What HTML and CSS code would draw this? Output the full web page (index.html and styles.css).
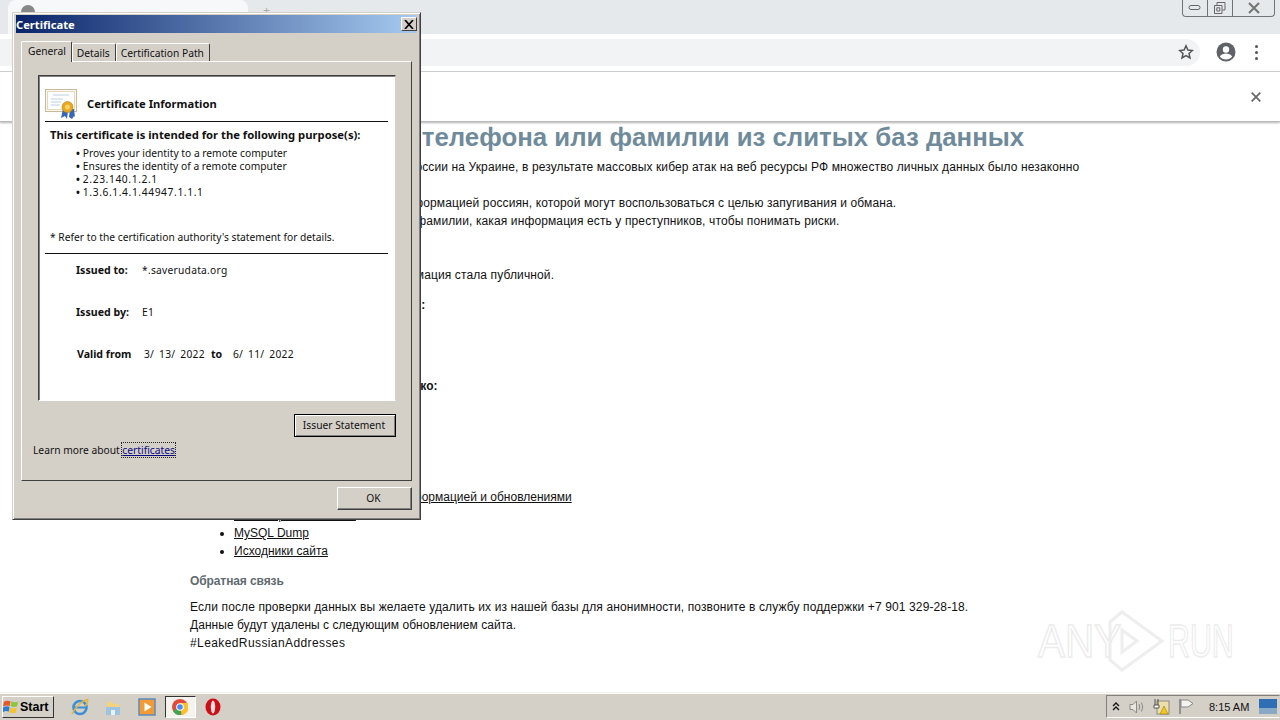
FILE: index.html
```html
<!DOCTYPE html>
<html lang="ru">
<head>
<meta charset="utf-8">
<title>Certificate</title>
<link rel="stylesheet" href="styles.css">
</head>
<body>
<div class="screen">
  <div class="tabstrip">
    <div class="tab"><span class="favicon"></span></div>
    <span class="newtab">+</span>
    <div class="winbtns">
      <span class="winbtn"><svg width="14" height="8" viewBox="0 0 14 8"><rect x="1" y="1.5" width="11" height="4" rx="2" fill="none" stroke="#666"/></svg></span>
      <span class="winbtn"><svg width="14" height="14" viewBox="0 0 14 14"><path d="M4 4V1.500h8V9H9.500M1.500 4.500H9V12.500H1.500ZM3.800 6.800H6.800V10H3.800Z" fill="none" stroke="#666"/></svg></span>
      <span class="winbtn wide"><svg width="14" height="12" viewBox="0 0 14 12"><path d="M2 1l10 10M12 1L2 11" stroke="#777" stroke-width="2.200" fill="none"/></svg></span>
    </div>
  </div>
  <div class="toolbar">
    <div class="omnibox">
      <svg class="star" width="16" height="16" viewBox="0 0 16 16"><path d="M8 1.800l1.900 4.200 4.500.5-3.400 3 1 4.500L8 11.700 4 14l1-4.500-3.400-3 4.500-.5z" fill="none" stroke="#555" stroke-width="1.500"/></svg>
    </div>
    <svg class="avatar" width="20" height="20" viewBox="0 0 20 20"><circle cx="10" cy="10" r="9.500" fill="#5f6368"/><circle cx="10" cy="7.500" r="3.200" fill="#fff"/><path d="M3.800 14.500c1.500-2.300 4-3 6.200-3s4.700.7 6.200 3c-1.500 2-3.700 3-6.200 3s-4.700-1-6.200-3z" fill="#fff"/></svg>
    <span class="dots"><i></i><i></i><i></i></span>
  </div>
  <div class="infobar">
    <svg width="10" height="10" viewBox="0 0 10 10"><path d="M.7.700l8.600 8.600M9.300.700L.7 9.300" stroke="#666" stroke-width="1.700"/></svg>
  </div>
  <main class="page">
    <h1>Проверка номера телефона или фамилии из слитых баз данных</h1>
    <p class="lead">В связи с началом вторжения, войска России на Украине, в результате массовых кибер атак на веб ресурсы РФ множество личных данных было незаконно<br>опубликовано.</p>
    <p>Этот сайт содержит большую базу с информацией россиян, которой могут воспользоваться с целью запугивания и обмана.<br>Проверьте по номеру телефона и / или фамилии, какая информация есть у преступников, чтобы понимать риски.</p>
    <p class="far">Мы не взламывали сервера, вся информация стала публичной.</p>
    <p class="gap"><b>Какие данные хранятся в слитой базе:</b></p>
    <ul class="plain">
      <li>Имя и фамилия</li>
      <li>Номер телефона</li>
      <li>Адрес и e-mail</li>
    </ul>
    <p class="gap9"><b>Что можно проверить на сайтах, только:</b></p>
    <ul class="links">
      <li>Скачать базу</li>
      <li>Проверить телефон</li>
      <li>Проверить фамилию</li>
      <li>Проверить адрес</li>
      <li>Проверить e-mail</li>
      <li><a href="#">Наш новый Telegram канал с информацией и обновлениями</a></li>
      <li><a href="#">Torrent файл базы РФ</a></li>
      <li><a href="#">MySQL Dump</a></li>
      <li><a href="#">Исходники сайта</a></li>
    </ul>
    <h2>Обратная связь</h2>
    <p>Если после проверки данных вы желаете удалить их из нашей базы для анонимности, позвоните в службу поддержки +7 901 329-28-18.<br><span class="snug">Данные будут удалены с следующим обновлением сайта.</span><br><span class="hash">#LeakedRussianAddresses</span></p>
    <div class="watermark">
      <span class="wm-any">ANY</span>
      <svg width="58" height="62" viewBox="0 0 58 62"><path d="M3 12L15 2l40 29-40 29L3 50V12zM15 20v22l15-11z" fill="none" stroke="#eeeeee" stroke-width="3"/></svg>
      <span class="wm-run">RUN</span>
    </div>
  </main>
  <footer class="taskbar">
    <button class="start">
      <svg width="17" height="17" viewBox="0 0 18 17"><path d="M1 3.500q3-2 7-.5l-1 5q-3-1.500-7 .5z" fill="#e8562a"/><path d="M9 3q3 1.500 7 .5l-1.200 5q-3.800 1-6.800-.5z" fill="#8cc63f"/><path d="M0 9.500q4-2 7-.5l-1 5q-3-1.500-6 .5z" fill="#2a7fd5"/><path d="M7.800 9.500q3 1.500 6.800.5l-1.200 5q-3.500 1-6.600-.5z" fill="#f6c22e"/></svg>
      <span>Start</span>
    </button>
    <div class="quick">
      <span class="qi"><svg width="18" height="18" viewBox="0 0 18 18"><circle cx="9" cy="9.500" r="6.500" fill="none" stroke="#3b8ed8" stroke-width="2.600"/><path d="M3.500 9.500h11" stroke="#3b8ed8" stroke-width="2"/><path d="M1 16C3 11 10 3 16.500 1.500 17 6 15 7 14 8" fill="none" stroke="#e5b53b" stroke-width="1.500"/></svg></span>
      <span class="qi"><svg width="18" height="18" viewBox="0 0 18 18"><path d="M3 4h5l1.500 2H15v10H3z" fill="#f2d27a"/><path d="M2 9h14v8H2z" fill="#9cc3df"/><path d="M7 12h4v5H7z" fill="#e9f1f6"/></svg></span>
      <span class="qi"><svg width="18" height="18" viewBox="0 0 18 18"><rect x="1" y="1" width="16" height="16" fill="#f39a35" stroke="#5a8cc0" stroke-width="1.500"/><path d="M6.500 4.500v9l7-4.500z" fill="#fff"/></svg></span>
      <span class="qi active"><svg width="16" height="16" viewBox="0 0 16 16"><circle cx="8" cy="8" r="8" fill="#e14b3c"/><path d="M8 8L1 12a8 8 0 0 0 8 4z" fill="#3aa757"/><path d="M8 4h7.500a8 8 0 0 1-6 12z" fill="#fbc02d"/><circle cx="8" cy="8" r="3.800" fill="#fff"/><circle cx="8" cy="8" r="2.800" fill="#4a8af4"/></svg></span>
      <span class="qi"><svg width="16" height="18" viewBox="0 0 16 18"><ellipse cx="8" cy="9" rx="7.500" ry="8.500" fill="#cc0f16"/><ellipse cx="8" cy="9" rx="2.200" ry="6.500" fill="#f3dede"/></svg></span>
    </div>
    <div class="tray">
      <svg width="8" height="9" viewBox="0 0 8 9"><path d="M1 4l3-3 3 3M1 8l3-3 3 3" fill="none" stroke="#111" stroke-width="1.300"/></svg>
      <svg class="t1" width="16" height="16" viewBox="0 0 16 16"><path d="M1 5.500h3L7.500 2v12L4 10.500H1z" fill="#e8e6e0" stroke="#8a8a88"/><path d="M10 5q1.500 3 0 6M12.500 3.500q2.500 4.500 0 9" fill="none" stroke="#8a8a88"/></svg>
      <svg class="t2" width="17" height="17" viewBox="0 0 17 17"><rect x="4" y="3" width="12" height="13" fill="#ecdfa8" stroke="#8a8a80"/><path d="M2 1v6M5 1v6M1 7h5v3H1z" fill="#fff" stroke="#555"/><path d="M11 8l4 8H7z" fill="#f6c51e" stroke="#8a6d10" stroke-width=".5"/></svg>
      <svg class="t3" width="17" height="17" viewBox="0 0 17 17"><path d="M2 1v15" stroke="#777" stroke-width="1.400"/><path d="M3 2h7l5 3.500-5 3.500H3z" fill="#f4f3ef" stroke="#888"/></svg>
      <span class="clock">8:15 AM</span>
      <svg class="t4" width="18" height="15" viewBox="0 0 18 15"><rect width="18" height="15" fill="#2f6db5"/><rect y="9" width="18" height="6" fill="#88a8c8"/></svg>
    </div>
  </footer>
</div>

<section class="dialog">
  <header class="titlebar">
    <span>Certificate</span>
    <span class="closebtn"><svg width="10" height="9" viewBox="0 0 10 9"><path d="M1 0l8 9M9 0L1 9" stroke="#000" stroke-width="1.700"/></svg></span>
  </header>
  <nav class="tabs">
    <span class="dtab on">General</span>
    <span class="dtab">Details</span>
    <span class="dtab">Certification Path</span>
  </nav>
  <div class="panel">
    <div class="whitebox">
      <div class="cert-head">
        <svg width="33" height="30" viewBox="0 0 33 30"><rect x=".5" y=".5" width="31" height="22" fill="#fbf8ee" stroke="#c9b99a"/><rect x="2.500" y="2.500" width="27" height="18" fill="#fff" stroke="#e4d8be"/><path d="M8 6h16M6 10h12M6 13h10M6 16h9" stroke="#bcd0e4"/><path d="M18 20l-2 9 4-2 2 3 1-8zM25 20l-1 8 3 2 2-3 1 1-1-8z" fill="#3566b8"/><circle cx="22.500" cy="18" r="5.500" fill="#e8a920" stroke="#b98316" stroke-width=".6"/><circle cx="22.500" cy="18" r="2.500" fill="#f7d264"/></svg>
        <strong>Certificate Information</strong>
      </div>
      <h3>This certificate is intended for the following purpose(s):</h3>
      <ul class="purposes">
        <li>Proves your identity to a remote computer</li>
        <li>Ensures the identity of a remote computer</li>
        <li class="num">2.23.140.1.2.1</li>
        <li class="num">1.3.6.1.4.1.44947.1.1.1</li>
      </ul>
      <p class="refer">* Refer to the certification authority's statement for details.</p>
      <dl class="facts">
        <div><dt>Issued to:</dt><dd>*.saverudata.org</dd></div>
        <div><dt>Issued by:</dt><dd>E1</dd></div>
        <div class="valid"><dt>Valid from</dt><dd>3/ 13/ 2022</dd><dt class="to">to</dt><dd>6/ 11/ 2022</dd></div>
      </dl>
    </div>
    <div class="stmt-row"><button class="btn default">Issuer Statement</button></div>
    <p class="learn">Learn more about <a href="#">certificates</a></p>
  </div>
  <div class="ok-row"><button class="btn ok">OK</button></div>
</section>
</body>
</html>
```
FILE: styles.css
```css
* { box-sizing: border-box; }
html, body { margin: 0; height: 720px; overflow: hidden; background: #fff; }
body { font-family: "Liberation Sans", Arial, sans-serif; }
.screen { width: 1280px; height: 720px; display: flex; flex-direction: column; }

.tabstrip { height: 34px; flex: none; background: #e6e9eb; display: flex; align-items: flex-start; padding-left: 8px; }
.tab { width: 240px; height: 34px; background: #f7f8f9; border-radius: 8px 8px 0 0; padding: 5px 0 0 13px; }
.favicon { display: block; width: 14px; height: 14px; border-radius: 50%; background: #888; }
.newtab { margin: 3px 0 0 15px; font-size: 12px; color: #aaa; line-height: 16px; }
.winbtns { margin-left: auto; margin-right: 5px; display: flex; height: 17px; border: 1px solid #6f7478; border-top: 0; border-radius: 0 0 4px 4px; }
.winbtn { width: 25px; display: flex; align-items: center; justify-content: center; border-right: 1px solid #6f7478; }
.winbtn.wide { width: 41px; border-right: 0; }

.toolbar { height: 38px; flex: none; background: #fff; border-bottom: 1px solid #d0d1d3; display: flex; align-items: center; padding-bottom: 1px; }
.omnibox { width: 1200px; height: 27px; background: #f1f3f4; border-radius: 0 14px 14px 0; display: flex; align-items: center; justify-content: flex-end; padding-right: 6px; }
.avatar { margin-left: 16px; }
.dots { margin-left: 19px; display: flex; flex-direction: column; gap: 3px; }
.dots i { display: block; width: 3px; height: 3px; border-radius: 50%; background: #555; }

.infobar { height: 50px; flex: none; background: #fff; border-bottom: 1px solid #bbb; box-shadow: 0 1px 2px rgba(0,0,0,.3); display: flex; align-items: center; justify-content: flex-end; padding: 0 19px 0 0; position: relative; z-index: 1; }

.page { flex: 1; padding: 0 0 0 190px; color: #111; font-size: 12px; line-height: 18px; position: relative; min-height: 0; letter-spacing: .12px; }
.page h1 { margin: 0; font-size: 25.800px; line-height: 30px; color: #6f8b9b; letter-spacing: 0; white-space: nowrap; }
.page p { margin: 0; }
.page .lead { margin-top: 6px; }
.page .far { margin-top: 36px; }
.page .gap { margin-top: 12px; }
.page .gap9 { margin-top: 9px; }
.page ul { margin: 0; padding: 0 0 0 44px; }
.page .links { margin-top: 3px; }
.page a { color: #111; letter-spacing: 0; }
.page h2 { margin: 12px 0 8px; font-size: 12px; line-height: 18px; color: #5f6a70; letter-spacing: -.1px; }
.hash { letter-spacing: .4px; }
.snug { letter-spacing: .04px; }
.watermark { position: absolute; left: 1038px; top: 488px; display: flex; align-items: center; font-size: 46px; line-height: 62px; color: transparent; -webkit-text-stroke: 1.5px #ececec; }
.wm-any, .wm-run { display: inline-block; width: 67px; transform-origin: left center; white-space: nowrap; letter-spacing: 0; }
.wm-any { transform: scaleX(.88); }
.wm-run { width: 64px; transform: scaleX(.66); }
.watermark svg { margin: 0 3px 0 2px; }

.taskbar { height: 28px; flex: none; background: #d4d0c8; border-top: 1px solid #f4f2ec; box-shadow: inset 0 1px 0 #fff; display: flex; align-items: center; padding-left: 2px; }
.start { width: 52px; height: 22px; padding: 0; display: flex; align-items: center; gap: 0; background: #d4d0c8; border: 1px solid; border-color: #fff #333 #333 #fff; font: bold 12.500px "Liberation Sans", sans-serif; color: #000; }
.quick { margin-left: 9px; display: flex; align-items: center; }
.qi { width: 33.500px; height: 22px; display: flex; align-items: center; justify-content: center; }
.qi.active { width: 31px; margin: 0 1px; background: #f5f3ee; border: 1px solid; border-color: #333 #fff #fff #333; }
.tray { margin-left: auto; width: 174px; height: 23px; display: flex; align-items: center; border: 1px solid; border-color: #808080 #d4d0c8 #fff #808080; padding-left: 5px; }
.t1 { margin-left: 9px; }
.t2 { margin-left: 8px; }
.t3 { margin-left: 8px; }
.clock { margin-left: 14px; font: 11px "Liberation Sans", sans-serif; color: #111; white-space: nowrap; }
.t4 { margin-left: 10px; }

.dialog { position: absolute; z-index: 10; left: 12px; top: 12px; width: 409px; height: 508px; background: #d4d0c8; border: 1px solid; border-color: #d4d0c8 #404040 #404040 #d4d0c8; box-shadow: inset 1px 1px 0 #fff, inset -1px -1px 0 #808080; padding: 2px 3px 0; font-family: "Noto Sans", sans-serif; font-size: 10.250px; color: #111; }
.titlebar { height: 18px; background: linear-gradient(90deg, #0a246a, #a6caf0); color: #fff; font-weight: bold; font-size: 11.200px; line-height: 17px; padding-left: 0; display: flex; justify-content: space-between; align-items: center; }
.closebtn { width: 16px; height: 14px; background: #d4d0c8; border: 1px solid; border-color: #fff #404040 #404040 #fff; display: flex; align-items: center; justify-content: center; }
.tabs { display: flex; align-items: flex-end; height: 28px; margin-left: 5px; position: relative; z-index: 1; }
.dtab { height: 18px; padding: 0 5px 0 4px; line-height: 18px; border: 1px solid; border-bottom: 0; border-color: #fff #404040 #fff #fff; border-radius: 2px 2px 0 0; }
.dtab.on { height: 21px; padding: 0 5px 0 6px; line-height: 18px; background: #d4d0c8; margin-bottom: -1px; }
.panel { margin-left: 5px; width: 391px; height: 420px; border: 1px solid; border-color: #fff #404040 #404040 #fff; padding: 13px 15px 0 16px; }
.whitebox { height: 326px; background: #fff; border: 1px solid; border-color: #404040 #d4d0c8 #fff #404040; box-shadow: inset 1px 1px 0 #808080; padding: 11px 7px 0 6px; }
.cert-head { display: flex; align-items: center; gap: 9px; height: 35px; border-bottom: 1px solid #111; padding-bottom: 1px; font-size: 11.200px; }
.whitebox h3 { margin: 5px 0 0 5px; font-size: 11.250px; line-height: 15px; font-weight: bold; }
.purposes { margin: 5px 0 0 31px; padding: 0; list-style: none; line-height: 13px; }
.purposes li::before { content: "•"; margin-right: 3px; font-weight: bold; letter-spacing: 0; }
.purposes .num { letter-spacing: .6px; }
.refer { margin: 32px 0 0 5px; line-height: 13px; padding-bottom: 9px; }
.facts { margin: 0; padding-top: 9px; border-top: 1px solid #111; }
.facts div { display: flex; height: 42px; padding-left: 31px; line-height: 15px; }
.facts dt { font-weight: bold; width: 66px; font-size: 10.600px; }
.facts dd { margin: 0; letter-spacing: .25px; }
.valid dt { width: 67px; margin-left: 1px; }
.valid dd { width: 66px; word-spacing: 2px; }
.valid dd:last-child { width: auto; }
.valid dt.to { width: 22px; margin: 0 0 0 1px; }
.stmt-row { display: flex; justify-content: flex-end; margin-top: 13px; }
.btn { font: inherit; background: #d4d0c8; color: #111; padding: 0; }
.btn.default { width: 102px; height: 23px; padding: 0 2px 1px 0; border: 1px solid #000; box-shadow: inset 1px 1px 0 #fff, inset -1px -1px 0 #808080; }
.learn { margin: 5px 0 0 -5px; line-height: 16px; }
.learn a { color: #0a0a80; text-decoration: underline; outline: 1px dotted #222; }
.ok-row { display: flex; justify-content: flex-end; padding: 6px 5px 0 0; }
.btn.ok { width: 75px; height: 23px; padding: 0 2px 1px 0; border: 1px solid; border-color: #fff #404040 #404040 #fff; box-shadow: inset -1px -1px 0 #808080; }
```
